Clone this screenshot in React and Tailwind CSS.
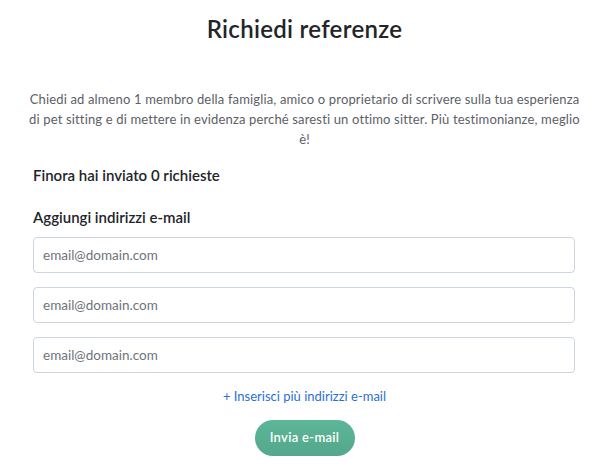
import React, { useState } from "react";

const EmailField = ({ value, onChange }) => (
  <input
    type="email"
    value={value}
    onChange={onChange}
    placeholder="email@domain.com"
    className="w-full h-[36px] px-[9px] border border-[#cdd5de] rounded-[4px] text-[13.5px] text-[#2d2f33] placeholder:text-[#6f747b] outline-none"
  />
);

export default function App() {
  const [emails, setEmails] = useState(["", "", ""]);

  const updateEmail = (i, v) => {
    const next = [...emails];
    next[i] = v;
    setEmails(next);
  };

  return (
    <div
      className="w-[609px] h-[472px] bg-white text-[#222428] overflow-hidden"
      style={{ fontFamily: "Lato, 'Noto Sans', sans-serif" }}
    >
      <div className="px-[33px] pt-[14px]">
        <h1 className="text-center text-[24px] font-semibold leading-[30px] tracking-[0.3px]">
          Richiedi referenze
        </h1>

        <p className="mt-[45px] mx-[-8px] text-center text-[13px] leading-[20px] tracking-[0.15px] text-[#5c6067]">
          Chiedi ad almeno 1 membro della famiglia, amico o proprietario di
          scrivere sulla tua esperienza
          <br />
          di pet sitting e di mettere in evidenza perché saresti un ottimo
          sitter. Più testimonianze, meglio
          <br />
          è!
        </p>

        <h3 className="mt-[16px] text-[15px] font-semibold leading-[20px]">
          Finora hai inviato 0 richieste
        </h3>

        <h3 className="mt-[22px] text-[15px] font-semibold leading-[20px]">
          Aggiungi indirizzi e-mail
        </h3>

        <div className="mt-[10px] flex flex-col gap-[14px] pr-[1px]">
          {emails.map((email, i) => (
            <EmailField
              key={i}
              value={email}
              onChange={(e) => updateEmail(i, e.target.value)}
            />
          ))}
        </div>

        <div className="mt-[14px] flex flex-col items-center">
          <button
            type="button"
            onClick={() => setEmails([...emails, ""])}
            className="text-[13px] leading-[18px] text-[#2b6fd4]"
          >
            + Inserisci più indirizzi e-mail
          </button>

          <button
            type="button"
            className="mt-[15px] w-[100px] h-[36px] rounded-full bg-gradient-to-b from-[#5cb698] to-[#54a78b] text-white text-[13px] font-semibold tracking-[0.3px]"
          >
            Invia e-mail
          </button>
        </div>
      </div>
    </div>
  );
}
